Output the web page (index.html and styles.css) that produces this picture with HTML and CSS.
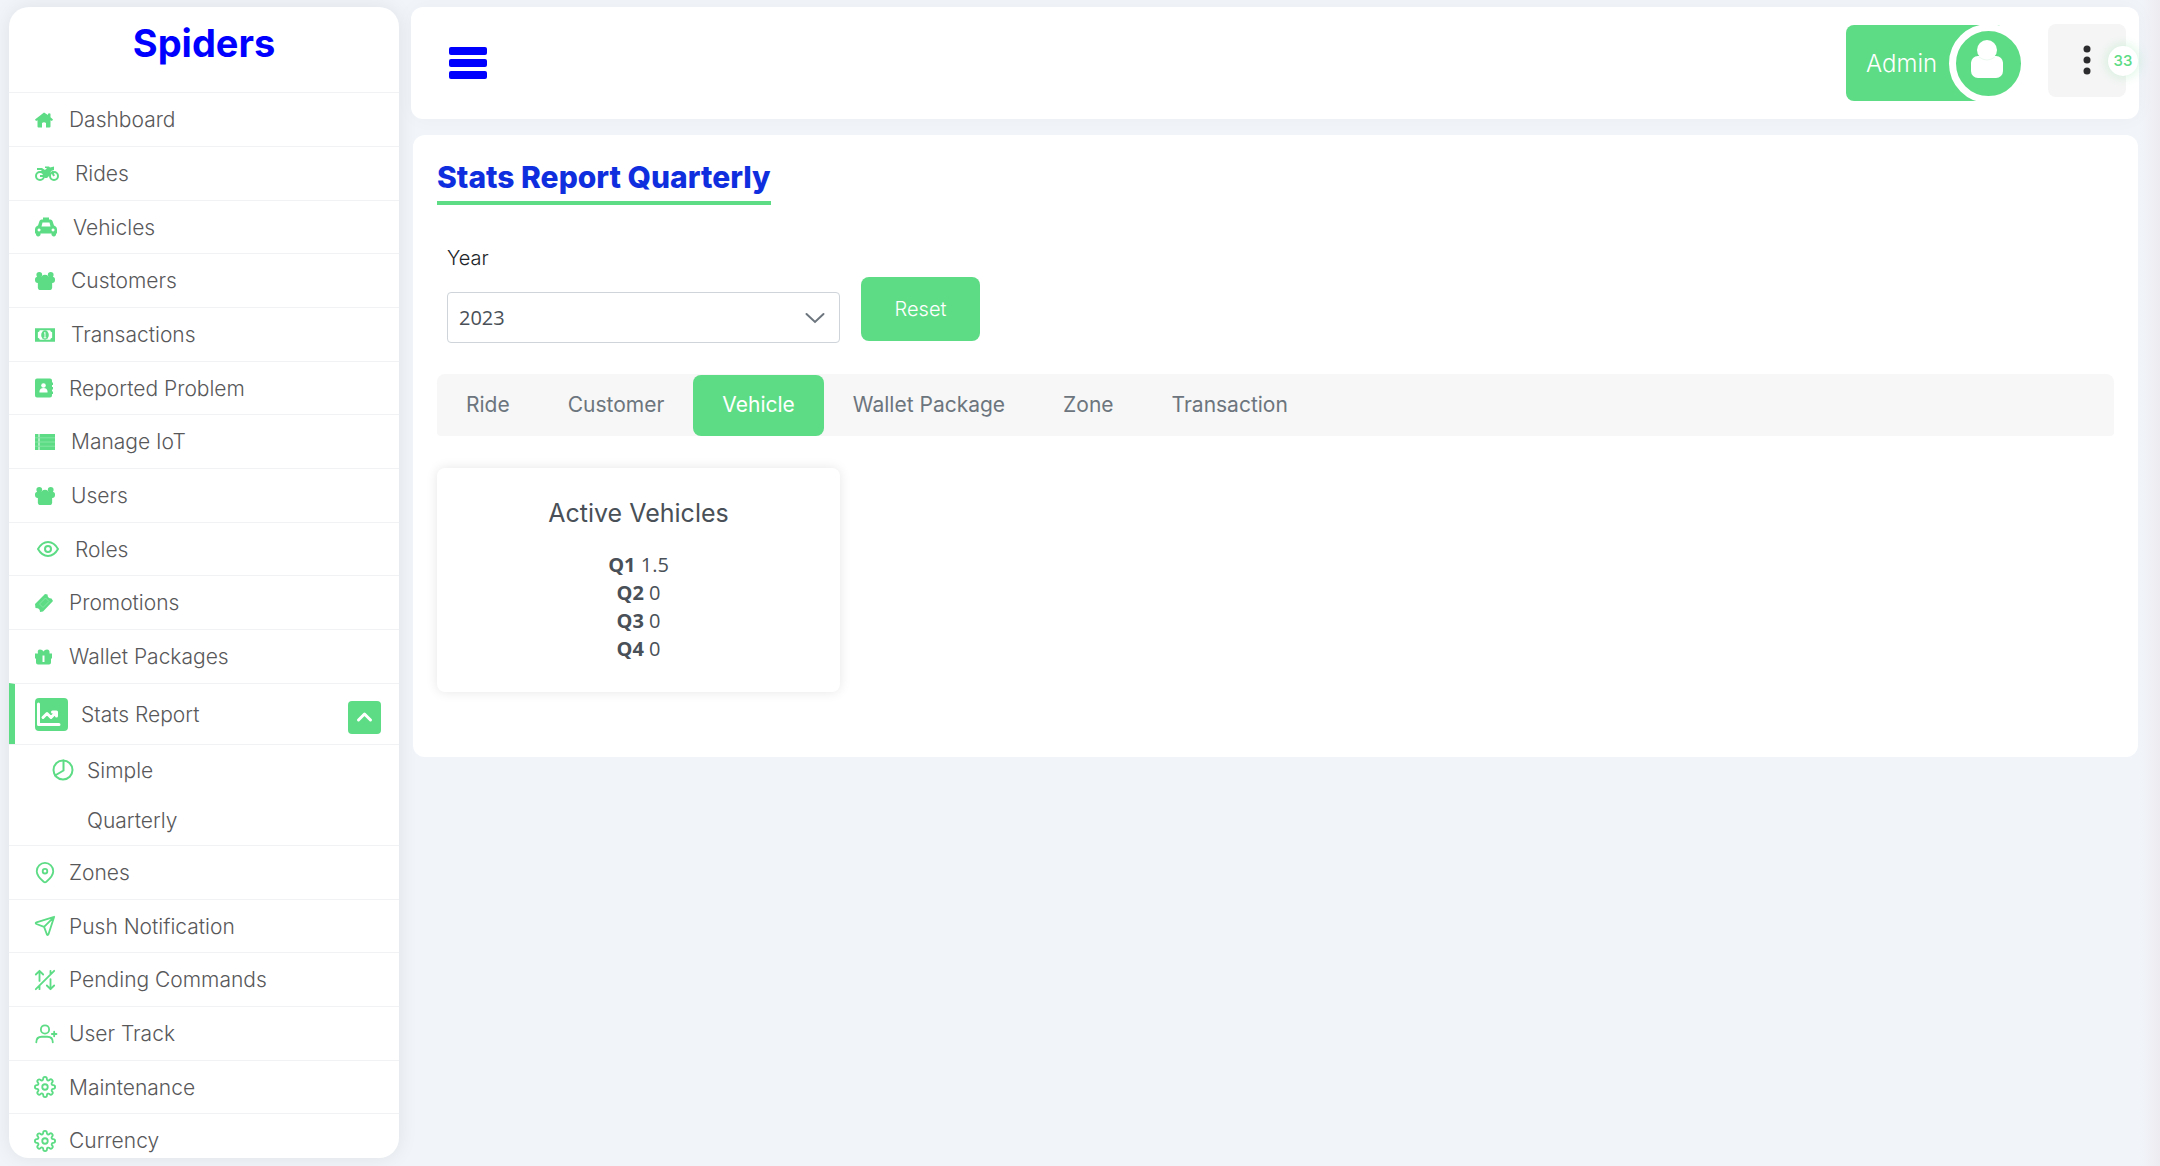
FILE: index.html
```html
<!DOCTYPE html>
<html lang="en">
<head>
<meta charset="utf-8">
<title>Spiders - Stats Report Quarterly</title>
<link rel="stylesheet" href="styles.css">
</head>
<body>
<svg class="sprite" aria-hidden="true">
  <symbol id="people" viewBox="0 0 21 19"><circle cx="4.500" cy="3" r="3"/><circle cx="16.500" cy="3" r="3"/><rect y="5" width="21" height="6.500" rx="3"/><circle cx="10.500" cy="7" r="4"/><rect x="3" y="8" width="15" height="11" rx="3"/></symbol>
  <symbol id="gear" viewBox="0 0 24 24"><circle cx="12" cy="12" r="3"/><path d="M19.4 15a1.65 1.65 0 0 0 .33 1.82l.06.06a2 2 0 0 1-2.83 2.83l-.06-.06a1.65 1.65 0 0 0-2.8 1.17V21a2 2 0 0 1-4 0v-.09a1.65 1.65 0 0 0-2.91-1.26l-.06.06a2 2 0 0 1-2.83-2.83l.06-.06A1.65 1.65 0 0 0 3.090 14H3a2 2 0 0 1 0-4h.09A1.65 1.65 0 0 0 4.350 7.180l-.06-.06a2 2 0 0 1 2.830-2.830l.06.06A1.65 1.65 0 0 0 10 3.090V3a2 2 0 0 1 4 0v.09a1.65 1.65 0 0 0 2.820 1.260l.06-.06a2 2 0 0 1 2.830 2.830l-.06.06A1.65 1.65 0 0 0 20.910 10H21a2 2 0 0 1 0 4h-.09a1.65 1.65 0 0 0-1.510 1z"/></symbol>
</svg>
<div class="app">
  <aside class="sidebar">
    <h1 class="brand">Spiders</h1>
    <nav class="menu">
      <a class="item" href="#"><svg class="icon w18" viewBox="0 0 18 15"><path d="M9 0 0 7l1 1.500 1.500-.8V14q0 1 1 1H7v-4.500q2-1.500 4 0V15h3.500q1 0 1-1V7.700l1.500.8L18 7l-2.500-2.200V1.200q-1.300-1-2.500 0v1.300z"/></svg>Dashboard</a>
      <a class="item" href="#"><svg class="icon w24" viewBox="0 0 24 15"><path d="M2 1.500h5l3 2 2-2h-2V0h4l1 1 4-1v3.500l-3 1-1 4-3 3H9.500l-1-3L5 5 7 3.500H2z"/><g class="ring"><circle cx="5" cy="9.500" r="4"/><circle cx="19" cy="9.500" r="4"/><path d="M5 9.500h3M17 5l2 4.500"/></g></svg>Rides</a>
      <a class="item" href="#"><svg class="icon w22" viewBox="0 0 22 19"><path fill-rule="evenodd" d="M8 0h6v2h1.500q1.500 0 2 1.500L19 8q3 1 3 4v4h-1v1.500q-2 3-4.500 0V16h-11v1.500q-2.500 3-4.500 0V16H0v-4q0-3 3-4l1.500-4.500Q5 2 6.500 2H8zM7.500 5 6.500 9h9l-1-4zM4 11a1.500 1.500 0 1 0 .1 0zm14 0a1.500 1.500 0 1 0 .1 0z"/></svg>Vehicles</a>
      <a class="item" href="#"><svg class="icon w20"><use href="#people"/></svg>Customers</a>
      <a class="item" href="#"><svg class="icon w20" viewBox="0 0 21 14"><path fill-rule="evenodd" d="M0 0h21v14H0zM5 2q0 1.500-2 2v6q2 .5 2 2h11q0-1.500 2-2V4q-2-.5-2-2z"/><ellipse cx="10.500" cy="7" rx="4" ry="5"/><path class="white" d="M9.500 4h1.500v5.500h1v1H9v-1h1V5.500h-.5z"/></svg>Transactions</a>
      <a class="item" href="#"><svg class="icon w18" viewBox="0 0 18 19"><path d="M2 0h13q2 0 2 2v2h1v2.500h-1v2h1V11h-1v2h1v2.500h-1V17q0 2-2 2H2q-2 0-2-2V2Q0 0 2 0z"/><circle class="white" cx="8.500" cy="7" r="2.300"/><path class="white" d="M4.500 14v-1.500q.5-3 4-3t4 3V14z"/></svg>Reported Problem</a>
      <a class="item" href="#"><svg class="icon w20" viewBox="0 0 20 16"><path d="M0 0h3.500v16H0zM4.500 0H20v16H4.500z"/><path class="faint" d="M0 3.800h20M0 8h20M0 12.200h20"/></svg>Manage IoT</a>
      <a class="item" href="#"><svg class="icon w20"><use href="#people"/></svg>Users</a>
      <a class="item" href="#"><svg class="icon w24 line" viewBox="0 0 24 22"><path d="M3 11q4-7 10-7t10 7q-4 7-10 7T3 11z"/><circle cx="13" cy="11" r="3"/></svg>Roles</a>
      <a class="item" href="#"><svg class="icon w18" viewBox="0 0 18 18"><path d="M0 10 10 0l2.500.5q0 2 1 3t3 1L18 7 8 17.500l-3 .5q0-2-1-3t-3.500-1z"/><path class="faint" d="m4.500 10 6-6L14 7.500l-6 6z"/></svg>Promotions</a>
      <a class="item" href="#"><svg class="icon w18" viewBox="0 0 18 15"><path fill-rule="evenodd" d="M3 4Q2 0 5 0q2.500 0 3.500 2Q9.500 0 12 0q3 0 2.500 4H17v5h-1v4q0 2-2 2H3q-2 0-2-2V9H0V4zM7.500 6v6.500h2V6z"/></svg>Wallet Packages</a>
      <a class="item open" href="#"><span class="tile"><svg viewBox="0 0 33 33"><path d="M3.500 6v20.500H24M8 19.500l4-4 4 4 5.500-5.500M17.500 14h4v4"/></svg></span>Stats Report<span class="tile toggle"><svg viewBox="0 0 33 33"><path d="m10.500 19 6-6 6 6"/></svg></span></a>
      <div class="submenu">
        <a class="sub" href="#"><svg class="icon line" viewBox="0 0 22 22"><circle cx="11" cy="11" r="9.500"/><path d="M11.500 1.500v10L3 16.500"/></svg>Simple</a>
        <a class="sub" href="#"><span class="blank"></span>Quarterly</a>
      </div>
      <a class="item" href="#"><svg class="icon line pull" viewBox="0 0 24 24"><path d="M21 10c0 4.500-4 8.500-7.500 11.500q-1.500 1.200-3 0C7 18.500 3 14.500 3 10a9 9 0 0 1 18 0z"/><circle cx="12" cy="10" r="2.500"/></svg>Zones</a>
      <a class="item" href="#"><svg class="icon line pull" viewBox="0 0 24 24"><path d="M22 2 11 13M22 2l-6.200 19q-.8 2-1.800 0l-3-8-8.300-3.200q-1.700-1 0-1.800z"/></svg>Push Notification</a>
      <a class="item" href="#"><svg class="icon line pull" viewBox="0 0 24 24"><path d="M2 22 22 2M6 13V2M2 6l4-4 4 4M18 11v11M14 18l4 4 4-4M6 22v-4M18 2v4"/></svg>Pending Commands</a>
      <a class="item" href="#"><svg class="icon line pull" viewBox="0 0 24 24"><circle cx="12" cy="7" r="4.500"/><path d="M2.500 21q0-6 6-6h6q6 0 6 6M22 9.500v5M19.500 12h5"/></svg>User Track</a>
      <a class="item" href="#"><svg class="icon line pull"><use href="#gear"/></svg>Maintenance</a>
      <a class="item" href="#"><svg class="icon line pull"><use href="#gear"/></svg>Currency</a>
    </nav>
  </aside>
  <div class="page">
    <header class="topbar">
      <button class="burger" type="button" aria-label="Toggle menu"><i></i><i></i><i></i></button>
      <div class="tools">
        <button class="account" type="button">Admin<span class="avatar"><svg viewBox="0 0 32 38"><circle cx="16" cy="10" r="10"/><rect y="16" width="32" height="22" rx="7"/><rect y="16" width="32" height="18" rx="10"/><path class="under" d="M8 17q8 6 16 0"/></svg></span></button>
        <button class="more" type="button" aria-label="Notifications"><svg viewBox="0 0 8 30"><circle cx="4" cy="4" r="3.500"/><circle cx="4" cy="15" r="3.500"/><circle cx="4" cy="26" r="3.500"/></svg><span class="badge">33</span></button>
      </div>
    </header>
    <main class="panel">
      <h2 class="title">Stats Report Quarterly</h2>
      <form class="filters">
        <div class="field">
          <label for="year">Year</label>
          <div class="select">
            <select id="year"><option>2023</option></select>
            <svg viewBox="0 0 20 12"><path d="m1.500 2 8.500 8 8.500-8"/></svg>
          </div>
        </div>
        <button class="reset" type="button">Reset</button>
      </form>
      <div class="tabs" role="tablist">
        <button type="button" role="tab">Ride</button>
        <button type="button" role="tab">Customer</button>
        <button type="button" role="tab" class="active" aria-selected="true">Vehicle</button>
        <button type="button" role="tab">Wallet Package</button>
        <button type="button" role="tab">Zone</button>
        <button type="button" role="tab">Transaction</button>
      </div>
      <div class="cards">
        <section class="card">
          <h3>Active Vehicles</h3>
          <p><b>Q1</b> 1.5</p>
          <p><b>Q2</b> 0</p>
          <p><b>Q3</b> 0</p>
          <p><b>Q4</b> 0</p>
        </section>
      </div>
    </main>
  </div>
</div>
</body>
</html>
```
FILE: styles.css
```css
:root {
  --green: #5ddc85;
  --text: #58585a;
}
* { box-sizing: border-box; }
body {
  margin: 0;
  background: linear-gradient(to left, #edebf0, #f1f5fa) right / 20px 100% no-repeat #f1f5fa;
  color: var(--text);
  font-family: Inter, "Liberation Sans", sans-serif;
  font-size: 20px;
  font-weight: 300;
}
h1, h2, h3, p { margin: 0; }
a { color: inherit; text-decoration: none; }
button { border: 0; padding: 0; font: inherit; cursor: pointer; }
.sprite { position: absolute; width: 0; height: 0; }

.app {
  display: flex;
  gap: 12px;
  height: 100vh;
  padding: 7px 21px 8px 9px;
}

/* Sidebar */
.sidebar {
  flex: 0 0 390px;
  overflow: hidden;
  background: #fff;
  border-radius: 20px;
  box-shadow: 0 0 20px rgba(0, 0, 0, .08);
}
.brand {
  height: 85px;
  padding-top: 12px;
  color: #00f;
  font-size: 38px;
  font-weight: 700;
  line-height: 48px;
  text-align: center;
}
.menu { font-size: 21px; }
.item {
  display: flex;
  align-items: center;
  gap: 16px;
  height: 54px;
  padding-left: 26px;
  border-top: 1px solid #f1f2f4;
}
.item:nth-child(3n) { height: 53px; }
.icon { flex: none; width: 22px; height: 22px; fill: var(--green); }
.w18 { width: 18px; }
.w20 { width: 20px; }
.w24 { width: 24px; }
.pull { margin: 0 -3px 0 -1px; }
.line {
  fill: none;
  stroke: var(--green);
  stroke-width: 2;
  stroke-linecap: round;
  stroke-linejoin: round;
  overflow: visible;
}
.ring { fill: #fff; stroke: var(--green); stroke-width: 2; }
.white { fill: #fff; }
.faint { fill: none; stroke: #85e5a4; stroke-width: 1; }
.menu .open {
  gap: 13px;
  height: 61px;
  padding: 0 18px 0 20px;
  border-left: 6px solid var(--green);
}
.tile {
  display: flex;
  width: 33px;
  height: 33px;
  border-radius: 4px;
  background: var(--green);
}
.tile svg { fill: none; stroke: #fff; stroke-width: 3; stroke-linecap: round; stroke-linejoin: round; }
.toggle { margin: 6px 0 0 auto; }
.submenu { padding-left: 43px; border-top: 1px solid #f1f2f4; }
.sub { display: flex; align-items: center; gap: 13px; height: 50px; }
.blank { width: 22px; }

/* Top bar */
.page { flex: 1; min-width: 0; }
.topbar {
  display: flex;
  align-items: center;
  justify-content: space-between;
  height: 112px;
  padding: 0 13px 0 38px;
  background: #fff;
  border-radius: 12px;
  box-shadow: 0 0 20px rgba(0, 0, 0, .03);
}
.burger { display: grid; gap: 4px; width: 38px; background: none; }
.burger i { height: 8px; border-radius: 2px; background: #00f; }
.tools { display: flex; align-items: center; gap: 44px; }
.account {
  display: flex;
  align-items: center;
  justify-content: space-between;
  width: 158px;
  height: 76px;
  padding-left: 20px;
  border-radius: 8px;
  background: var(--green);
  color: #fff;
  font-size: 24px;
}
.avatar {
  display: grid;
  place-items: center;
  flex: none;
  width: 79px;
  height: 79px;
  margin-right: -24px;
  padding: 0 4px 8px 0;
  border: 7px solid #fff;
  border-radius: 50%;
  background: var(--green);
}
.avatar svg { width: 32px; height: 38px; fill: #fff; }
.avatar .under { fill: none; stroke: #ecfaf1; }
.more {
  position: relative;
  display: grid;
  place-items: center;
  width: 78px;
  height: 73px;
  margin-bottom: 6px;
  border-radius: 8px;
  background: #f5f5f5;
}
.more svg { width: 8px; height: 30px; fill: #2c2c2e; }
.badge {
  position: absolute;
  top: 22px;
  right: -12px;
  width: 30px;
  height: 30px;
  border-radius: 50%;
  background: #fff;
  box-shadow: 0 0 12px rgba(93, 220, 133, .3);
  color: var(--green);
  font-size: 15px;
  font-weight: 500;
  line-height: 30px;
}

/* Report */
.panel {
  margin: 16px 1px 0 2px;
  padding: 24px 24px 65px;
  background: #fff;
  border-radius: 12px;
}
.title {
  width: max-content;
  padding-bottom: 6px;
  border-bottom: 4px solid var(--green);
  color: #0f2fdf;
  font-size: 30px;
  font-weight: 800;
  line-height: 36px;
}
.filters { display: flex; align-items: flex-end; gap: 21px; margin: 41px 0 31px 10px; }
.field label { display: block; margin-bottom: 22px; color: #212529; line-height: 24px; }
.select { position: relative; width: 393px; }
.select select {
  display: block;
  width: 100%;
  height: 51px;
  padding: 0 11px;
  appearance: none;
  border: 1px solid #ced4da;
  border-radius: 4px;
  background: #fff;
  color: #495057;
  font: 20px "Open Sans", sans-serif;
}
.select svg {
  position: absolute;
  top: 20px;
  right: 15px;
  width: 20px;
  height: 12px;
  fill: none;
  stroke: #6c757d;
  stroke-width: 2;
  stroke-linecap: round;
}
.reset {
  width: 119px;
  height: 64px;
  margin-bottom: 2px;
  border-radius: 8px;
  background: var(--green);
  color: #fff;
}
.tabs { display: flex; height: 62px; padding-top: 1px; border-radius: 8px 8px 4px 4px; background: #f7f7f7; }
.tabs button { padding: 0 29px 2px; border-radius: 8px; background: none; color: #6c757d; font-size: 21px; font-weight: 400; }
.tabs .active { background: var(--green); color: #fff; }
.cards { display: flex; margin-top: 32px; }
.card {
  width: 403px;
  padding: 29px 0;
  border-radius: 8px;
  box-shadow: 0 0 12px rgba(0, 0, 0, .1);
  color: #495057;
  text-align: center;
}
.card h3 { margin-bottom: 22px; font-size: 25px; font-weight: 400; line-height: 32px; }
.card p { font-family: "Open Sans", sans-serif; font-weight: 400; line-height: 28px; }
```
